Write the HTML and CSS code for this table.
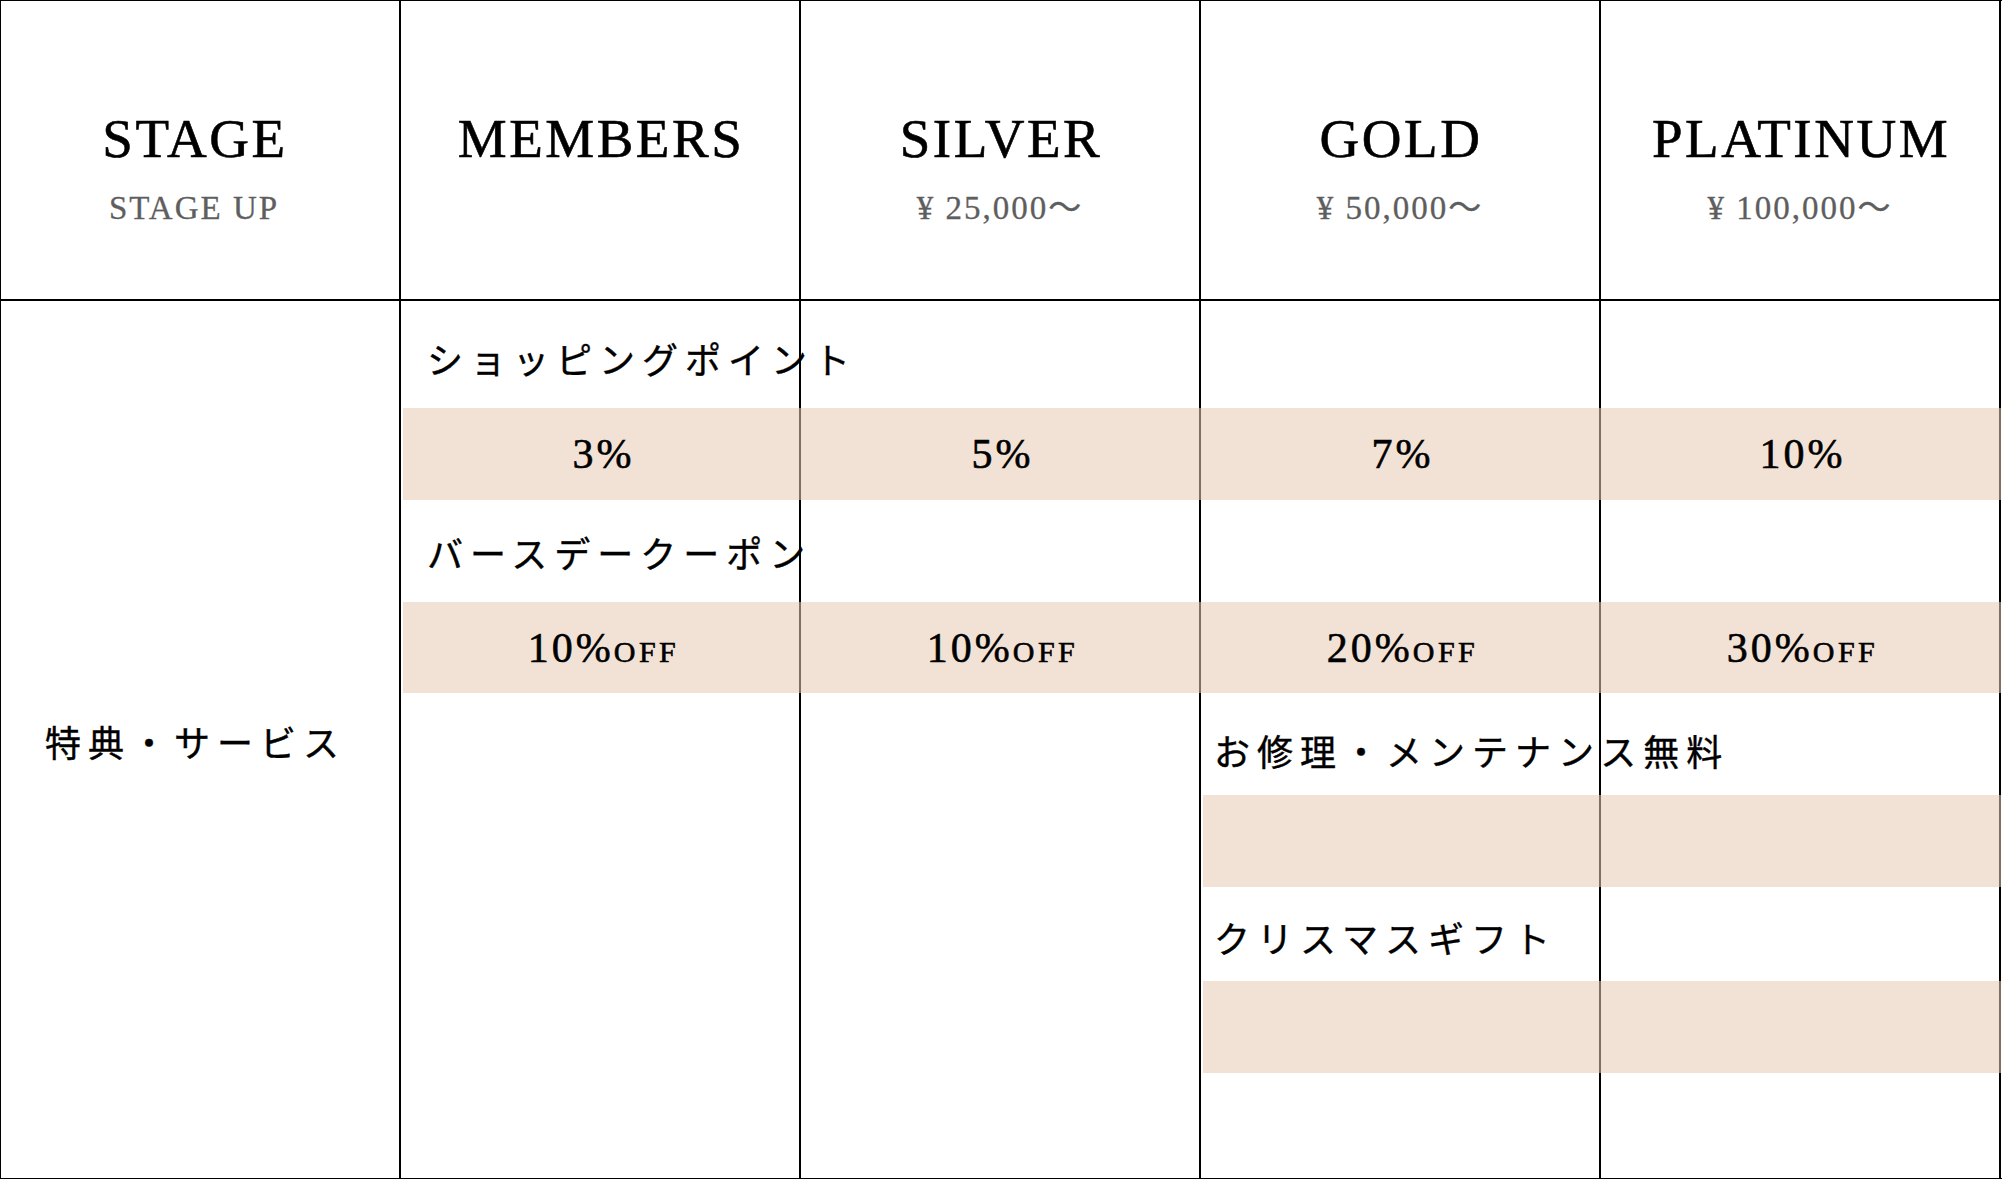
FILE: index.html
```html
<!DOCTYPE html>
<html lang="ja">
<head>
<meta charset="utf-8">
<title>Stage</title>
<link rel="stylesheet" href="styles.css">
</head>
<body>
<div class="table">
  <div class="head">
    <div class="hcell first"><div class="ttl">STAGE</div><div class="sub">STAGE UP</div></div>
    <div class="hcell"><div class="ttl">MEMBERS</div><div class="sub">&nbsp;</div></div>
    <div class="hcell"><div class="ttl">SILVER</div><div class="sub">¥ 25,000〜</div></div>
    <div class="hcell"><div class="ttl">GOLD</div><div class="sub">¥ 50,000〜</div></div>
    <div class="hcell"><div class="ttl">PLATINUM</div><div class="sub">¥ 100,000〜</div></div>
  </div>
  <div class="body">
    <div class="col c1"><span class="cat">特典・サービス</span></div>
    <div class="col c2"></div>
    <div class="col c3"></div>
    <div class="col c4"></div>
    <div class="col c5"></div>

    <div class="label l1">ショッピングポイント</div>
    <div class="band b1 wide">
      <span class="val">3%</span>
      <span class="val">5%</span>
      <span class="val">7%</span>
      <span class="val">10%</span>
    </div>

    <div class="label l2">バースデークーポン</div>
    <div class="band b2 wide">
      <span class="val">10%<span class="off">OFF</span></span>
      <span class="val">10%<span class="off">OFF</span></span>
      <span class="val">20%<span class="off">OFF</span></span>
      <span class="val">30%<span class="off">OFF</span></span>
    </div>

    <div class="label l3">お修理・メンテナンス無料</div>
    <div class="band b3"></div>

    <div class="label l4">クリスマスギフト</div>
    <div class="band b4"></div>
  </div>
</div>
</body>
</html>
```

FILE: styles.css
```css
html, body {
  margin: 0;
  padding: 0;
  background: #fff;
}

body {
  font-family: "Liberation Serif", "Noto Sans CJK JP", serif;
  color: #000;
}

.table {
  width: 2001px;
  border-left: 1px solid #000;
  border-top: 1px solid #000;
  border-bottom: 1px solid #000;
}

.head {
  display: grid;
  grid-template-columns: repeat(5, 400px);
}

.hcell {
  box-sizing: border-box;
  height: 300px;
  border-right: 2px solid #000;
  border-bottom: 2px solid #000;
  padding-top: 108px;
  display: flex;
  flex-direction: column;
  align-items: center;
}

.hcell.first {
  padding-right: 12px;
}

.ttl {
  font-size: 55px;
  line-height: 60px;
  letter-spacing: 2.5px;
  padding-left: 2px;
  -webkit-text-stroke: 0.6px #000;
}

.sub {
  margin-top: 21px;
  font-size: 33px;
  line-height: 36px;
  letter-spacing: 2px;
  color: #5e5e5e;
  -webkit-text-stroke: 0.3px #5e5e5e;
}

.body {
  display: grid;
  grid-template-columns: repeat(5, 400px);
  grid-template-rows: 107px 92px 102px 91px 102px 92px 94px 92px 105px;
}

.col {
  box-sizing: border-box;
  border-right: 2px solid #000;
  grid-row: 1 / -1;
}
.c1 { grid-column: 1; display: flex; align-items: center; justify-content: center; }
.c2 { grid-column: 2; }
.c3 { grid-column: 3; }
.c4 { grid-column: 4; }
.c5 { grid-column: 5; }

.cat {
  font-size: 36px;
  letter-spacing: 7px;
  padding-right: 9px;
  padding-top: 3px;
  -webkit-text-stroke: 0.4px #000;
}

.label {
  display: flex;
  align-items: center;
  font-size: 36px;
  line-height: 1;
  letter-spacing: 7px;
  white-space: nowrap;
  position: relative;
  z-index: 2;
  -webkit-text-stroke: 0.4px #000;
}
.l1 { grid-row: 1; grid-column: 2 / 6; padding-left: 26px; padding-top: 15px; }
.l2 { grid-row: 3; grid-column: 2 / 6; padding-left: 26px; padding-top: 9px; }
.l3 { grid-row: 5; grid-column: 4 / 6; padding-left: 13px; padding-top: 19px; }
.l4 { grid-row: 7; grid-column: 4 / 6; padding-left: 13px; padding-top: 14px; }

.band {
  background: rgba(231, 203, 179, 0.55);
  margin-left: 2px;
  position: relative;
  z-index: 1;
  display: grid;
  align-items: center;
}
.b1 { grid-row: 2; grid-column: 2 / 6; }
.b2 { grid-row: 4; grid-column: 2 / 6; }
.b3 { grid-row: 6; grid-column: 4 / 6; }
.b4 { grid-row: 8; grid-column: 4 / 6; }

.wide {
  grid-template-columns: 398px 400px 400px 400px;
}

.val {
  text-align: center;
  font-size: 42px;
  line-height: 1;
  letter-spacing: 3px;
  padding-left: 3px;
  -webkit-text-stroke: 0.6px #000;
}

.off {
  font-size: 30px;
  letter-spacing: 3.5px;
}
```
